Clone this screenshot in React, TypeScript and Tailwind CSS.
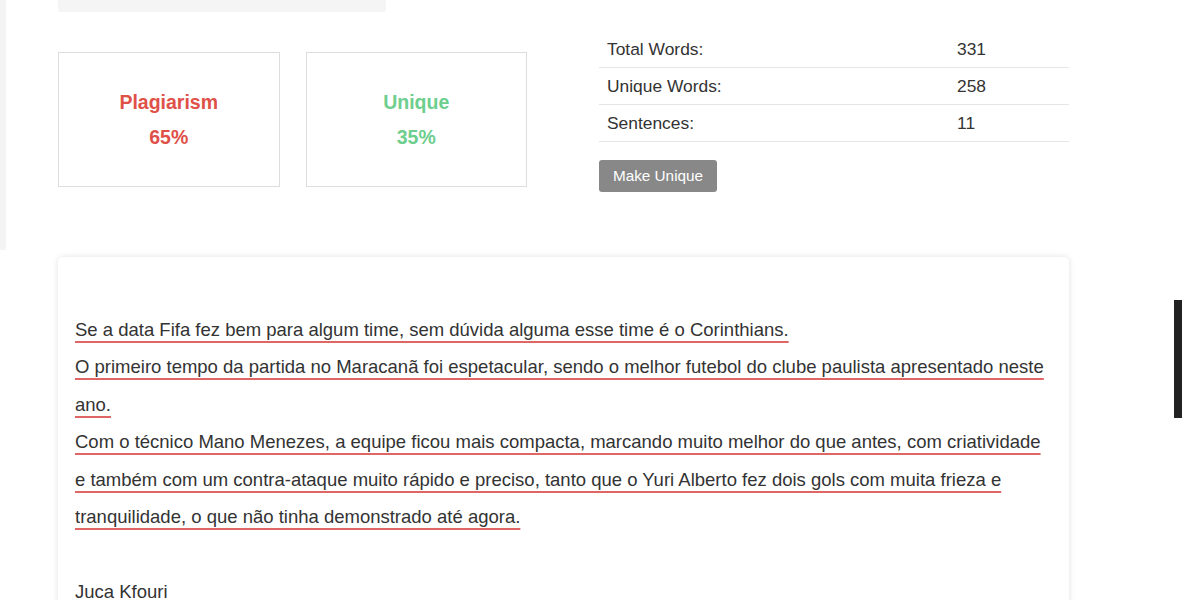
import React from "react";

const stats = [
	{ label: "Total Words:", value: "331" },
	{ label: "Unique Words:", value: "258" },
	{ label: "Sentences:", value: "11" },
];

const sentences = [
	"Se a data Fifa fez bem para algum time, sem dúvida alguma esse time é o Corinthians.",
	"O primeiro tempo da partida no Maracanã foi espetacular, sendo o melhor futebol do clube paulista apresentado neste ano.",
	"Com o técnico Mano Menezes, a equipe ficou mais compacta, marcando muito melhor do que antes, com criatividade e também com um contra-ataque muito rápido e preciso, tanto que o Yuri Alberto fez dois gols com muita frieza e tranquilidade, o que não tinha demonstrado até agora.",
];

function ScoreCard({ title, value, color }: { title: string; value: string; color: string }) {
	return (
		<div className="flex h-[135px] w-[222px] flex-col items-center justify-center border border-[#dddddd] bg-white">
			<span className={`text-[19.5px] font-bold leading-[35px] ${color}`}>{title}</span>
			<span className={`text-[19.5px] font-bold leading-[35px] ${color}`}>{value}</span>
		</div>
	);
}

export default function App() {
	return (
		<div className="relative min-h-[600px] overflow-hidden bg-white font-['Liberation_Sans',Arial,sans-serif] text-[#333333]">
			<section className="flex h-[250px] border-l-[6px] border-[#f4f4f4] pl-[52px]">
				<div className="w-[469px]">
					<div className="h-[12px] w-[328px] rounded-b-[3px] bg-[#f5f5f5]" />
					<div className="mt-[40px] flex gap-[26px]">
						<ScoreCard title="Plagiarism" value="65%" color="text-[#df5148]" />
						<ScoreCard title="Unique" value="35%" color="text-[#6dce8d]" />
					</div>
				</div>
				<div className="ml-[72px] mt-[31px] w-[470px]">
					{stats.map((row) => (
						<div key={row.label} className="flex h-[37px] items-center border-b border-[#e6e6e6] text-[17.4px]">
							<span className="w-[358px] pl-2">{row.label}</span>
							<span>{row.value}</span>
						</div>
					))}
					<button
						type="button"
						className="mt-[18px] h-[32px] w-[118px] rounded-[3px] bg-[#888888] text-[15.3px] text-white"
					>
						Make Unique
					</button>
				</div>
			</section>

			<article className="ml-[58px] mt-[7px] w-[1011px] rounded-[5px] bg-white px-[17px] pt-4 pb-6 text-[18.5px] leading-[37.5px] shadow-[0_0_6px_rgba(0,0,0,0.12)]">
				<p>
					<br />
				</p>
				<p>
					{sentences.map((s, i) => (
						<React.Fragment key={i}>
							<span className="underline decoration-[#e06666] decoration-2 underline-offset-[5px]">{s}</span>
							{i < sentences.length - 1 ? <br /> : null}
						</React.Fragment>
					))}
				</p>
				<p>
					<br />
				</p>
				<p>Juca Kfouri</p>
			</article>

			<div className="absolute right-0 top-[300px] h-[118px] w-[8px] bg-[#222222]" />
		</div>
	);
}
